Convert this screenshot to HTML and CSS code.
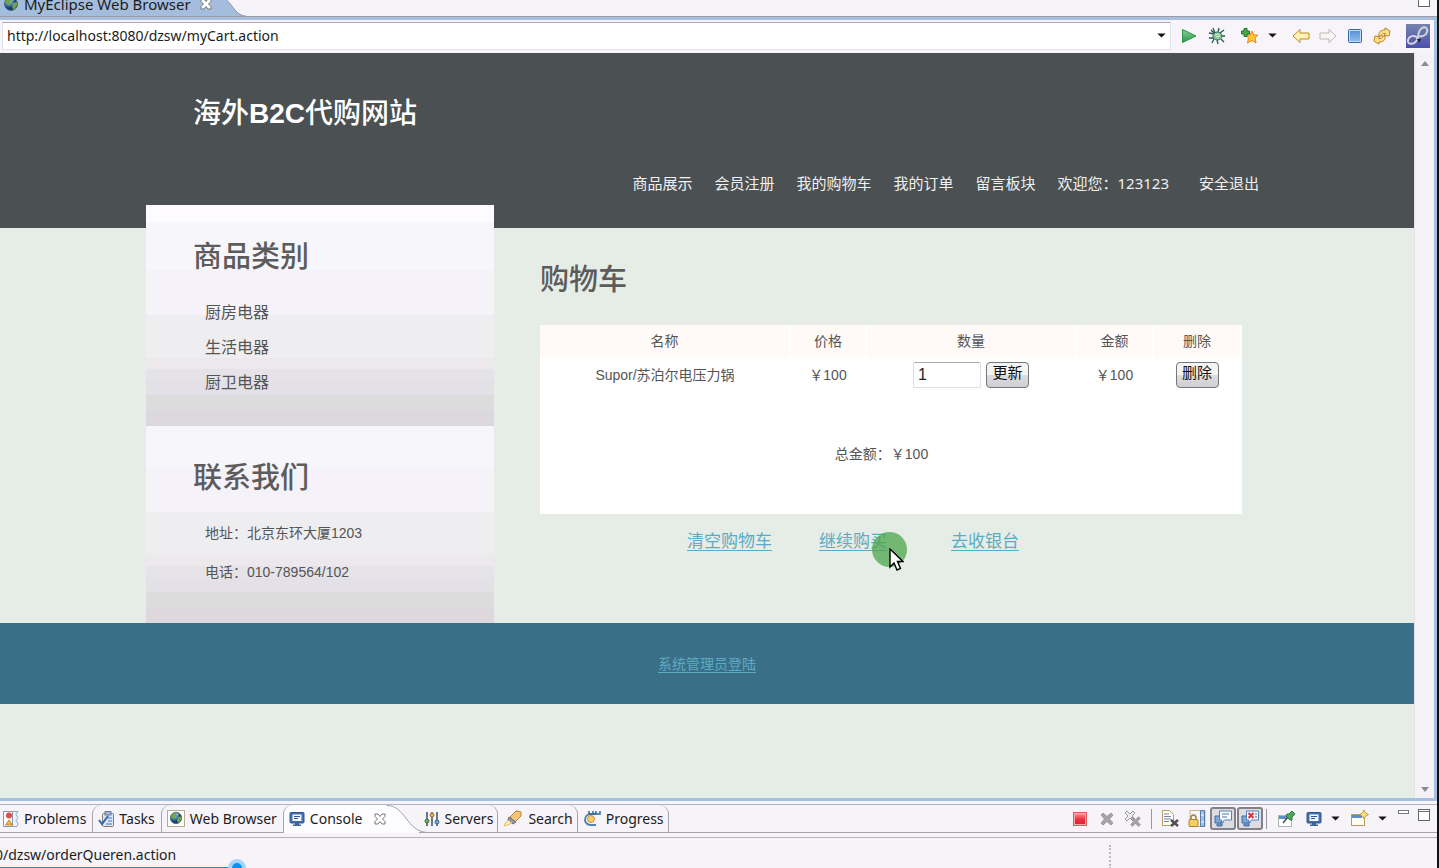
FILE: index.html
```html
<!DOCTYPE html>
<html lang="zh-CN">
<head>
<meta charset="utf-8">
<title>MyEclipse Web Browser</title>
<link rel="stylesheet" href="styles.css">
</head>
<body>
<svg class="defs" width="0" height="0" aria-hidden="true">
  <defs>
    <radialGradient id="globeFill" cx="35%" cy="30%"><stop offset="0" stop-color="#d4ecfa"/><stop offset=".5" stop-color="#4d8fc0"/><stop offset="1" stop-color="#173f6d"/></radialGradient>
    <linearGradient id="playFill" x2="0" y2="1"><stop offset="0" stop-color="#8fd09a"/><stop offset="1" stop-color="#22984a"/></linearGradient>
    <linearGradient id="blueFill" x2="0" y2="1"><stop offset="0" stop-color="#5a92d8"/><stop offset="1" stop-color="#8dbbea"/></linearGradient>
    <linearGradient id="badgeFill" x2="0" y2="1"><stop offset="0" stop-color="#7484ac"/><stop offset="1" stop-color="#4c50ae"/></linearGradient>
    <linearGradient id="redFill" x2="0" y2="1"><stop offset="0" stop-color="#ff8d8d"/><stop offset=".5" stop-color="#ee3344"/><stop offset="1" stop-color="#dd2233"/></linearGradient>
    <symbol id="globe" viewBox="0 0 16 16"><circle cx="8" cy="8" r="6.5" fill="url(#globeFill)" stroke="#4d6d86"/><path d="M4 3l4-1 1 2-2 2 1 2-3 1-3-3zM10 7l4-1v3l-3 5-2-3z" fill="#74a34a"/><path d="M8 3l3 0-1 2z" fill="#e5dc93"/></symbol>
    <symbol id="close" viewBox="0 0 14 14"><path d="M2 2h3l2 2.5L9 2h3v2.500L9.500 7l2.500 2.500V12H9L7 9.500 5 12H2V9.500L4.500 7 2 4.500z" fill="#fff" stroke="#777"/></symbol>
    <symbol id="monitor" viewBox="0 0 16 16"><rect x="1" y="1.500" width="14" height="10.500" rx="1" fill="#4470ad" stroke="#2f568f"/><rect x="3.500" y="3.500" width="9" height="6.500" fill="#f4f8ff"/><path d="M5 5.500h6M5 7.500h4" stroke="#36558c"/><path d="M6 12h4v1.500h2V15H4v-1.500h2z" fill="#3c649e"/></symbol>
    <symbol id="caret" viewBox="0 0 10 6"><path d="M0 .500h10L5 5.500z" fill="#151515"/></symbol>
    <symbol id="window" viewBox="0 0 12 12"><rect x=".500" y=".500" width="11" height="11" fill="#fff" stroke="#666"/><path d="M1 2.500h10" stroke="#777"/></symbol>
    <symbol id="cross" viewBox="0 0 16 16"><path d="M2 4l2-2 4 3.500L12 2l2 2-3.500 4L14 12l-2 2-4-3.500L4 14l-2-2 3.500-4z" fill="#a5a3a6" stroke="#8f8d90" stroke-width=".8"/></symbol>
  </defs>
</svg>

<div class="editor-tabs">
  <div class="editor-tab">
    <svg class="icon16"><use href="#globe"/></svg>
    <span>MyEclipse Web Browser</span>
    <button class="plain" aria-label="Close"><svg width="14" height="14"><use href="#close"/></svg></button>
  </div>
  <svg class="editor-curve" width="34" height="17" viewBox="0 0 34 17"><path d="M0 -2h2C12 2 12 15 26 16.500V17H0z" fill="#a4bddd"/><path d="M2 -2C12 2 12 15 26 16.500h8" fill="none" stroke="#8f95a3"/></svg>
  <button class="plain maximize" aria-label="Maximize"><svg width="12" height="12"><use href="#window"/></svg></button>
</div>

<div class="browser">
  <form class="address-bar">
    <div class="address">
      <input type="text" aria-label="Address" value="http://localhost:8080/dzsw/myCart.action">
      <button type="button" class="plain" aria-label="History"><svg width="9" height="5"><use href="#caret"/></svg></button>
    </div>
    <div class="tools">
      <button type="button" class="plain go" aria-label="Go"><svg class="icon16" viewBox="0 0 16 16"><path d="M1.500 1.500L15 8 1.500 14.500z" fill="url(#playFill)" stroke="#299149"/></svg></button>
      <button type="button" class="plain debug" aria-label="Debug"><svg width="18" height="18" viewBox="0 0 18 18"><path d="M5 1l2 5M11 1l-1 4M1 6l5 1M1 11h5M4 16l2-4M10 17l-1-4M13 12l3 3M13 9h4M12 6l4-3M3 3l3 3" stroke="#275a55" stroke-width="1.300"/><ellipse cx="9.500" cy="9" rx="4.500" ry="4" fill="#8bc69a" stroke="#2f6e60"/><path d="M7 8l4-1M8 10l4-1" stroke="#d8f3cf"/></svg></button>
      <button type="button" class="plain favorite" aria-label="Add favorite"><svg width="18" height="16" viewBox="0 0 18 16"><path d="M11 3l1.800 4H17l-3 3 1 5-4-2.500L6.500 15l1-5-3-3h4.700z" fill="#ffc533" stroke="#e88824"/><path d="M3 .500h3V3h2.500v3H6v2.500H3V6H.500V3H3z" fill="#4da84c" stroke="#25752d"/></svg></button>
      <button type="button" class="plain favlist" aria-label="Favorites"><svg width="9" height="5"><use href="#caret"/></svg></button>
      <button type="button" class="plain back" aria-label="Back"><svg width="18" height="16" viewBox="0 0 18 16"><path d="M1 8l7-6.500V5h9v6H8v3.500z" fill="#fff1b5" stroke="#c08b25" stroke-linejoin="round"/></svg></button>
      <button type="button" class="plain forward" aria-label="Forward"><svg width="18" height="16" viewBox="0 0 18 16"><path d="M17 8l-7-6.500V5H1v6h9v3.500z" fill="#f7f5f5" stroke="#bbb8b5" stroke-linejoin="round"/></svg></button>
      <button type="button" class="plain stop" aria-label="Stop"><svg width="14" height="14" viewBox="0 0 14 14"><rect x=".500" y=".500" width="13" height="13" rx="1" fill="#c3daf2" stroke="#3569aa"/><rect x="2" y="2" width="10" height="10" fill="url(#blueFill)"/></svg></button>
      <button type="button" class="plain refresh" aria-label="Refresh"><svg width="18" height="18" viewBox="0 0 18 18"><path d="M6 9c-1-4 2-6 6-6V.800L17 4l-1 5-5-.5 1.500-2C10 6 8.500 7 8.500 9z" fill="#ffdf85" stroke="#b8842e" stroke-linejoin="round"/><path d="M12 9c1 4-2 6-6 6v2.200L1 14l1-5 5 .5-1.500 2c2.500.500 4-.500 4-2.500z" fill="#ffdf85" stroke="#b8842e" stroke-linejoin="round"/></svg></button>
      <svg width="24" height="24" viewBox="0 0 24 24"><rect width="24" height="24" fill="url(#badgeFill)"/><path d="M12 15c-3-5-9-3-10 1-1 5 6 5 9 0 2-3 0-9 5-12 4-2 6 1 5 4-1 4-6 5-9 4" fill="none" stroke="#d2d4de" stroke-width="2"/><path d="M11 15h4l-2 4z" fill="#171b3e"/></svg>
    </div>
  </form>

  <div class="viewport">
    <div class="page">
      <header class="site-header">
        <div class="wrap">
          <h1>海外<b>B2C</b>代购网站</h1>
          <nav>
            <a href="#">商品展示</a><a href="#">会员注册</a><a href="#">我的购物车</a><a href="#">我的订单</a><a href="#">留言板块</a><span>欢迎您：123123</span><a class="logout" href="#">安全退出</a>
          </nav>
        </div>
      </header>
      <div class="wrap columns">
        <aside>
          <section class="panel">
            <h2>商品类别</h2>
            <ul class="categories"><li><a href="#">厨房电器</a></li><li><a href="#">生活电器</a></li><li><a href="#">厨卫电器</a></li></ul>
          </section>
          <section class="panel contact">
            <h2>联系我们</h2>
            <p>地址：北京东环大厦1203</p>
            <p>电话：010-789564/102</p>
          </section>
        </aside>
        <main>
          <h2>购物车</h2>
          <table class="cart">
            <colgroup><col class="c-name"><col class="c-price"><col class="c-count"><col class="c-sum"><col class="c-del"></colgroup>
            <thead><tr><th>名称</th><th>价格</th><th>数量</th><th>金额</th><th>删除</th></tr></thead>
            <tbody>
              <tr><td>Supor/苏泊尔电压力锅</td><td>￥100</td><td><div class="quantity"><input type="text" aria-label="数量" value="1"><button>更新</button></div></td><td>￥100</td><td><button>删除</button></td></tr>
              <tr><td class="total" colspan="5">总金额：￥100</td></tr>
            </tbody>
          </table>
          <div class="actions">
            <a href="#">清空购物车</a><a href="#" class="hovered">继续购买<span class="spot"></span><svg class="pointer" width="15" height="24" viewBox="0 0 15 24"><path d="M1 1v18l4-4 3 7 3.500-1.500-3-7H14z" fill="#fff" stroke="#000" stroke-width="1.400"/></svg></a><a href="#">去收银台</a>
          </div>
        </main>
      </div>
      <footer><a href="#">系统管理员登陆</a></footer>
    </div>
    <div class="scrollbar">
      <svg width="8" height="5" viewBox="0 0 8 5"><path d="M0 5l4-5 4 5z" fill="#8b8b8f"/></svg>
      <svg width="8" height="5" viewBox="0 0 8 5"><path d="M0 0l4 5 4-5z" fill="#8b8b8f"/></svg>
    </div>
  </div>
</div>

<div class="views">
  <div class="view-tab first"><svg class="icon16" viewBox="0 0 16 16"><path d="M.500.500h9V15.500h-9z" fill="#fff" stroke="#8a93a8"/><path d="M10 .500h5l-2 3 2 3-2 3 2 3-1 3h-4" fill="#e8f2fb" stroke="#91abc3"/><circle cx="6" cy="4.500" r="3" fill="#e24c4c"/><path d="M6 9l3.500 5h-7z" fill="#f2b53d" stroke="#c9892a"/></svg><span>Problems</span></div>
  <div class="view-tab"><svg class="icon16" viewBox="0 0 16 16"><rect x="4.500" y="2.500" width="11" height="13" rx="1" fill="#dbe7f7" stroke="#8b7a62"/><rect x="7" y=".500" width="6" height="3.500" fill="#a3b7d4" stroke="#687d9d"/><path d="M10 7h4M10 10h4M8 13h6" stroke="#4c72aa"/><path d="M1 9l3 4 6-8" fill="none" stroke="#2a68b4" stroke-width="2"/></svg><span>Tasks</span></div>
  <div class="view-tab web"><svg width="18" height="17" viewBox="0 0 18 17"><rect x=".500" y=".500" width="17" height="16" fill="#fff" stroke="#b7ad8c"/><use href="#globe" x="2" y="1" width="14" height="14"/></svg><span>Web Browser</span></div>
  <div class="view-tab active"><svg class="icon16"><use href="#monitor"/></svg><span>Console</span><button class="plain" aria-label="Close console"><svg width="14" height="14"><use href="#close"/></svg></button></div>
  <svg class="view-curve" width="42" height="28" viewBox="0 0 42 28"><path d="M0 0C19 1 19 26 40 27.500H0z" fill="#fdfcfe"/><path d="M0 .500C19 1 19 26 40 27.500h2" fill="none" stroke="#a5a2a8"/></svg>
  <div class="view-tab after"><svg class="icon16" viewBox="0 0 16 16"><path d="M3 1v14M8 1v14M13 1v14" stroke="#36516c" stroke-width="1.500"/><circle cx="3" cy="10" r="2" fill="#72ad59" stroke="#3e7333"/><circle cx="8" cy="4" r="2" fill="#efb94a" stroke="#9a742b"/><circle cx="13" cy="11" r="2" fill="#78a9d5" stroke="#376890"/></svg><span>Servers</span></div>
  <div class="view-tab after search"><svg width="20" height="17" viewBox="0 0 20 17"><path d="M7 7l6-6 5 1v4l-6 6z" fill="#f7c474" stroke="#b98139"/><path d="M6 7l7 5-3 2-5-4z" fill="#8f97aa" stroke="#686d80"/><path d="M5 10l4 3-7 3-1-1z" fill="#fff0ad" stroke="#dfb768"/></svg><span>Search</span></div>
  <div class="view-tab after"><svg width="18" height="17" viewBox="0 0 18 17"><path d="M13 4H8C4 4 2 7 2 10s3 5 6 5h5" fill="none" stroke="#4d83b8" stroke-width="2"/><circle cx="8" cy="9" r="3.500" fill="#f5cb73" stroke="#d49430"/><path d="M6 4V1M10 4V1M13 4V1M17 1v3H6" fill="none" stroke="#336c9f" stroke-width="1.500"/></svg><span>Progress</span></div>
  <div class="view-tools">
    <button class="plain terminate" aria-label="Terminate"><svg width="14" height="14" viewBox="0 0 14 14"><rect x=".500" y=".500" width="13" height="13" fill="#f8aaaa" stroke="#d85a62"/><rect x="2" y="2" width="10" height="10" fill="url(#redFill)"/></svg></button>
    <button class="plain remove" aria-label="Remove launch"><svg class="icon16"><use href="#cross"/></svg></button>
    <button class="plain remove-all" aria-label="Remove all"><svg width="18" height="18" viewBox="0 0 18 18"><path d="M1 3l2-2 3 3 3-3 2 2-3 3 3 3-2 2-3-3-3 3-2-2 3-3z" fill="#eee" stroke="#999"/><use href="#cross" x="5" y="5" width="13" height="13"/></svg></button>
    <i class="separator"></i>
    <button class="plain clear" aria-label="Clear console"><svg width="18" height="17" viewBox="0 0 18 17"><path d="M1.500.500h7l4 4v11h-11z" fill="#fffef3" stroke="#b29d67"/><path d="M3 4h5M3 6.500h7M3 9h7M3 11.500h5" stroke="#6d86ad"/><path d="M10 10l7 6M17 10l-7 6" stroke="#4e4e53" stroke-width="2.500"/></svg></button>
    <button class="plain lock" aria-label="Scroll lock"><svg width="18" height="17" viewBox="0 0 18 17"><path d="M2 .500h15v16H2z" fill="#f4f7fb" stroke="#c6b886"/><path d="M12.500.500h4v16h-4z" fill="#a4bfe0" stroke="#587ca8"/><path d="M13 5h3M13 12h3" stroke="#fff"/><path d="M3 10V8c0-4 5-4 5 0v2" fill="none" stroke="#a68131" stroke-width="1.500"/><rect x="1" y="9.500" width="9" height="7" rx="1" fill="#f6ce62" stroke="#a7812e"/></svg></button>
    <button class="plain pressed" aria-label="Show on output"><svg width="18" height="17" viewBox="0 0 18 17"><path d="M1 6h8v7H1zM3 14h5v2H3z" fill="#7ea8d6" stroke="#416b9e"/><path d="M5.500 1h12v9h-7l-3 3v-3h-2z" fill="#f5f9ff" stroke="#5681b6"/><path d="M8 4h7M8 7h5" stroke="#517bae"/></svg></button>
    <button class="plain pressed" aria-label="Show on error"><svg width="18" height="17" viewBox="0 0 18 17"><path d="M1 6h8v7H1zM3 14h5v2H3z" fill="#7ea8d6" stroke="#416b9e"/><path d="M5.500 1h12v9h-7l-3 3v-3h-2z" fill="#f5f9ff" stroke="#5681b6"/><path d="M7.500 3l5 5M12.500 3l-5 5" stroke="#d83034" stroke-width="2"/><path d="M14 4h2M14 7h2" stroke="#4d6999"/></svg></button>
    <i class="separator"></i>
    <button class="plain pin" aria-label="Pin console"><svg width="17" height="16" viewBox="0 0 17 16"><rect x=".500" y="4.500" width="13" height="11" fill="#fff" stroke="#a7bcae"/><path d="M1 5h12v3H1z" fill="#5b91cb"/><path d="M5 12l4-5" stroke="#345c48" stroke-width="1.500"/><path d="M9 3l2 0 3-3 3 3-3 3v3l-2 0-4-4z" fill="#50a656" stroke="#2d7544"/></svg></button>
    <button class="plain display" aria-label="Display console"><svg class="icon16"><use href="#monitor"/></svg></button>
    <button class="plain" aria-label="Console list"><svg width="9" height="5"><use href="#caret"/></svg></button>
    <button class="plain open" aria-label="Open console"><svg width="18" height="17" viewBox="0 0 18 17"><rect x=".500" y="4.500" width="13" height="11" fill="#fffdf1" stroke="#b39c62"/><path d="M1 5h10v3H1z" fill="#5b91cb"/><path d="M13 0l1.500 3 3 1.500-3 1.500L13 9l-1.500-3-3-1.500 3-1.500z" fill="#ffe681" stroke="#c69831"/></svg></button>
    <button class="plain" aria-label="Open list"><svg width="9" height="5"><use href="#caret"/></svg></button>
    <button class="plain minimize" aria-label="Minimize"><svg width="11" height="4" viewBox="0 0 11 4"><rect x=".500" y=".500" width="10" height="3" fill="#fff" stroke="#777"/></svg></button>
    <button class="plain restore" aria-label="Maximize console"><svg width="12" height="12"><use href="#window"/></svg></button>
  </div>
</div>

<div class="status">
  <span>0/dzsw/orderQueren.action</span>
  <i class="grip"></i>
  <div class="seek"><i></i></div>
</div>
</body>
</html>
```
FILE: styles.css
```css
* { box-sizing: border-box; }
body {
  margin: 0;
  height: 100vh;
  display: flex;
  flex-direction: column;
  overflow: hidden;
  background: #f6f3f9;
  border-right: 2px solid #111;
  color: #1c1c1c;
  font: 14px/20px "Noto Sans", "Noto Sans CJK SC", sans-serif;
}
svg { display: block; flex: none; }
.defs { position: absolute; }
.icon16 { width: 16px; height: 16px; }
.plain { display: flex; align-items: center; padding: 0; border: 0; background: none; }

/* editor tab strip */
.editor-tabs { height: 17px; flex: none; display: flex; overflow: hidden; border-bottom: 1px solid #999ca8; }
.editor-tab { height: 23px; margin-top: -6px; padding: 0 0 3px 3px; display: flex; align-items: center; gap: 5px; background: #a4bddd; flex: none; font-size: 15px; }
.editor-tab .plain { padding: 0 8px 0 3px; }
.maximize { margin-left: auto; margin-right: 7px; height: 7px; align-items: flex-end; }

.browser { flex: 1; min-height: 0; display: flex; flex-direction: column; border: solid #a8c0df; border-width: 3px 3px 3px 0; }
.address-bar { height: 33px; flex: none; display: flex; align-items: center; gap: 10px; padding: 0 4px 2px 2px; background: #f7f4fa; }
.address { flex: 1; height: 28px; display: flex; align-items: center; border: 1px solid #e2e0e8; border-top-color: #aaa9b3; background: #fff; padding-right: 4px; }
.address input { flex: 1; min-width: 0; height: 26px; padding: 0 4px; border: 0; background: none; font: inherit; color: inherit; outline: 0; }
.tools { display: flex; align-items: center; }
.debug { margin-left: 11px; }
.favorite { margin-left: 15px; }
.favlist { margin-left: 9px; }
.back { margin-left: 15px; }
.forward { margin-left: 9px; }
.stop { margin-left: 11px; }
.refresh { margin: 0 15px 0 11px; }

.viewport { flex: 1; min-height: 0; display: flex; }
.page { flex: 1; min-width: 0; overflow: hidden; background: #e6ede6; color: #555; font: 14px/20px "Liberation Sans", "Noto Sans CJK SC", sans-serif; }
.scrollbar { width: 20px; flex: none; padding: 8px 0 6px; display: flex; flex-direction: column; justify-content: space-between; align-items: center; background: #f4f1f7; border-left: 1px solid #e5e2ea; }
.page a { color: inherit; }

/* shop page */
.wrap { max-width: 1122px; margin: 0 auto; }
.site-header { background: #4b5052; color: #fff; padding: 41px 0 35px; }
h1 { margin: 0 0 39px; padding-left: 47px; font-size: 28px; line-height: 40px; font-weight: 500; }
nav { display: flex; justify-content: flex-end; gap: 22px; padding-right: 9px; font: 15px/20px "Noto Sans", "Noto Sans CJK SC", sans-serif; color: #f1f1f1; }
nav a { text-decoration: none; }
nav .logout { margin-left: 8px; }
.columns { display: flex; gap: 46px; }
aside { width: 348px; flex: none; margin-top: -23px; position: relative; }
.panel {
  padding: 32px 47px 26px;
  background: linear-gradient(to top, #dcd8dd 15px, #dcdcdc 15px 31px, #e4e0e7 31px 45px, #e5e3e8 45px 57px, #ece8ec 57px 68px, #eeeef1 68px 111px, #f6f2f9 111px 156px, #f7f6fa 156px 204px, #fdfbff 204px);
}
.panel.contact { padding-bottom: 31px; }
.page h2 { margin: 0; color: #5c5c5c; font-size: 29px; line-height: 40px; font-weight: 500; }
.categories { list-style: none; margin: 18px 0 0; padding: 0 0 0 12px; font-size: 16px; line-height: 35px; }
.categories a { text-decoration: none; }
.contact h2 { margin-bottom: 16px; }
.contact p { margin: 0; padding-left: 12px; line-height: 39px; }
main { flex: 1; min-width: 0; padding: 32px 26px 0 0; }
.cart { width: 100%; margin-top: 25px; table-layout: fixed; border-collapse: collapse; background: #fff; text-align: center; }
.c-price { width: 76px; }
.c-count { width: 210px; }
.c-sum { width: 77px; }
.c-del { width: 88px; }
.cart th, .cart td { padding: 0; height: 36px; font-weight: 400; }
.cart th { height: 32px; background: #fffaf8; border-right: 2px solid #fff; }
.cart .total { height: 121px; padding: 0 18px 0 0; }
.quantity { display: flex; justify-content: center; align-items: center; gap: 5px; }
.cart input { width: 68px; height: 26px; padding: 0 4px; border: 1px solid #dedee2; border-top-color: #aaaab0; border-radius: 2px; font: 16px/20px "Liberation Sans", sans-serif; color: #222; }
.cart button { width: 43px; height: 26px; padding: 0 0 6px; border: 1px solid #77777b; border-radius: 4px; background: linear-gradient(#f4f4f4 50%, #dddde0 50%, #cfcfd3); font: 15px/18px "Noto Sans CJK SC", sans-serif; color: #111; }
.actions { display: grid; grid-template-columns: repeat(3, 132px); margin: 14px 0 0 147px; font-size: 17px; line-height: 28px; }
.page .actions a, .page footer a { color: #5cabc4; text-underline-offset: 3px; }
.hovered { position: relative; }
.spot { position: absolute; left: 53px; top: 4px; width: 35px; height: 35px; border-radius: 50%; background: rgba(75, 165, 75, .75); }
.pointer { position: absolute; left: 70px; top: 20px; }
footer { height: 81px; display: flex; align-items: center; justify-content: center; background: #3a7087; }

/* view tabs */
.views { height: 34px; flex: none; margin-top: 3px; display: flex; align-items: flex-start; border-top: 1px solid #b5b2b8; border-bottom: 1px solid #b5b2b8; }
.view-tab { height: 28px; flex: none; display: flex; align-items: center; gap: 5px; padding: 0 6px 0 5px; border: solid #a5a2a8; border-width: 0 0 1px 1px; border-top-left-radius: 9px; }
.view-tab.first { padding-left: 3px; border-left: 0; }
.view-tab.active { padding-right: 0; background: #fdfcfe; border-bottom: 0; }
.view-tab.active .plain { padding-left: 5px; }
.view-tab.after { border-width: 0 1px 1px 0; border-radius: 0 9px 0 0; padding: 0 4px 0 5px; }
.view-curve { margin-right: -10px; }
.view-tools { flex: 1; height: 28px; display: flex; align-items: center; justify-content: flex-end; padding-right: 7px; gap: 9px; border-bottom: 1px solid #a5a2a8; }
.remove { margin-left: 3px; }
.separator { width: 1px; height: 20px; background: #99979d; }
.pressed { width: 26px; height: 23px; margin-left: -5px; justify-content: center; border: 2px solid #828187; border-radius: 3px; background: #dddce2; }
.pressed + .pressed { margin-left: -8px; }
.pressed + .separator { margin-left: -6px; }
.pin, .display, .open, .minimize { margin-left: 2px; }
.minimize { height: 18px; align-items: flex-start; }
.restore { height: 20px; align-items: flex-start; }

.status { height: 30px; flex: none; position: relative; display: flex; justify-content: space-between; padding: 7px 326px 0 0; overflow: hidden; }
.status span { margin-left: -5px; }
.grip { border-left: 2px dotted #bbb8be; height: 24px; }
.seek { position: absolute; left: 0; bottom: 0; width: 237px; height: 1px; background: #0a90f5; }
.seek i { position: absolute; right: -9px; top: -8px; width: 18px; height: 18px; border: 4px solid #a9d4fa; border-radius: 50%; background: #0a90f5; }
```
